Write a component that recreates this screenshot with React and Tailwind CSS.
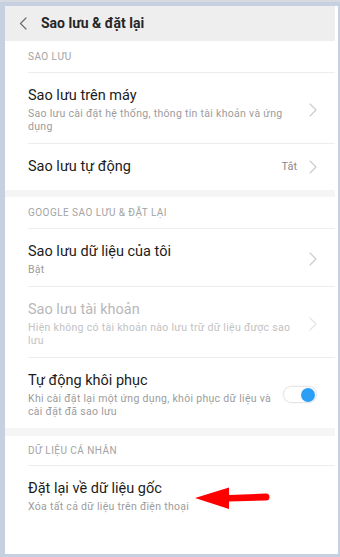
const font = { fontFamily: 'Roboto, "Noto Sans", sans-serif' }

function Label({ children, h = 'h-[31px]' }) {
  return (
    <div className={`${h} flex items-center pl-[23px] text-[10px] text-[#a3a3a3] tracking-[0.45px]`}>
      {children}
    </div>
  )
}

function Divider() {
  return <div className="ml-[23px] h-px bg-[#ededed]" />
}

function Band({ h = 'h-[7px]' }) {
  return <div className={`${h} bg-[#f5f5f5]`} />
}

function Chevron() {
  return (
    <svg width="8" height="14" viewBox="0 0 8 14" fill="none" className="shrink-0">
      <path d="M1 1 L7 7 L1 13" stroke="#c9c9c9" strokeWidth="1.1" strokeLinecap="round" strokeLinejoin="round" />
    </svg>
  )
}

function Row({ title, sub, disabled, right, h }) {
  return (
    <div className={`flex items-center pl-[23px] pr-[18px] ${sub ? 'pt-[13px] pb-[10px]' : h}`}>
      <div className="flex-1 min-w-0">
        <div className={`text-[14.5px] leading-[20px] ${disabled ? 'text-[#b8b8b8]' : 'text-[#1c1c1c]'}`}>{title}</div>
        {sub && (
          <div className={`mt-[1px] text-[10.5px] leading-[13px] tracking-[0.3px] ${disabled ? 'text-[#c2c2c2]' : 'text-[#9c9c9c]'}`}>{sub}</div>
        )}
      </div>
      {right}
    </div>
  )
}

function Toggle() {
  return (
    <div className="ml-[4px] w-[34px] h-[17px] rounded-full bg-white border border-[#e6e6e6] shadow-[0_0_2px_rgba(0,0,0,0.08)] flex items-center justify-end pr-[1px] shrink-0">
      <div className="w-[14px] h-[14px] rounded-full bg-[#2b9ff6]" />
    </div>
  )
}

export default function App() {
  return (
    <div style={font} className="w-[340px] h-[557px] bg-[#c7d0e1] border-t-2 border-[#d6d9df] pt-[4px] pl-[5px] pr-[2px] pb-[3px]">
      <div className="h-[548px] bg-white pr-[3px] overflow-hidden">
        {/* Header */}
        <div className="h-[35px] bg-[#eeeeee] flex items-center pl-[14px] gap-[14px]">
          <svg width="8" height="13" viewBox="0 0 8 13" fill="none">
            <path d="M7 1 L1.5 6.5 L7 12" stroke="#6b6b6b" strokeWidth="1.2" strokeLinecap="round" strokeLinejoin="round" />
          </svg>
          <span className="text-[14px] font-bold text-[#262626]">Sao lưu &amp; đặt lại</span>
        </div>

        <Label>SAO LƯU</Label>
        <Divider />
        <Row
          title="Sao lưu trên máy"
          sub="Sao lưu cài đặt hệ thống, thông tin tài khoản và ứng dụng"
          right={<div className="w-[22px] flex justify-end"><Chevron /></div>}
        />
        <Divider />
        <Row
          title="Sao lưu tự động"
          h="h-[46px]"
          right={
            <div className="flex items-center gap-[12px]">
              <span className="text-[11px] text-[#8a8a8a]">Tắt</span>
              <Chevron />
            </div>
          }
        />

        <Band />
        <Label>GOOGLE SAO LƯU &amp; ĐẶT LẠI</Label>
        <Divider />
        <Row
          title="Sao lưu dữ liệu của tôi"
          sub="Bật"
          right={<div className="w-[22px] flex justify-end"><Chevron /></div>}
        />
        <Divider />
        <Row
          title="Sao lưu tài khoản"
          sub="Hiện không có tài khoản nào lưu trữ dữ liệu được sao lưu"
          disabled
          right={<div className="w-[22px] flex justify-end opacity-50"><Chevron /></div>}
        />
        <Divider />
        <Row
          title="Tự động khôi phục"
          sub="Khi cài đặt lại một ứng dụng, khôi phục dữ liệu và cài đặt đã sao lưu"
          right={<Toggle />}
        />

        <Band h="h-[8px]" />
        <Label h="h-[29px]">DỮ LIỆU CÁ NHÂN</Label>
        <Divider />
        <div className="relative">
          <Row title="Đặt lại về dữ liệu gốc" sub="Xóa tất cả dữ liệu trên điện thoại" />
          <svg className="absolute left-[189px] top-[20px]" width="76" height="24" viewBox="0 0 76 24">
            <path d="M1 12 L35 1.5 L35 9 L72 7.5 A3.5 3.5 0 0 1 72 14.5 L35 15.5 L35 23 Z" fill="#ff0000" />
          </svg>
        </div>
      </div>
    </div>
  )
}
